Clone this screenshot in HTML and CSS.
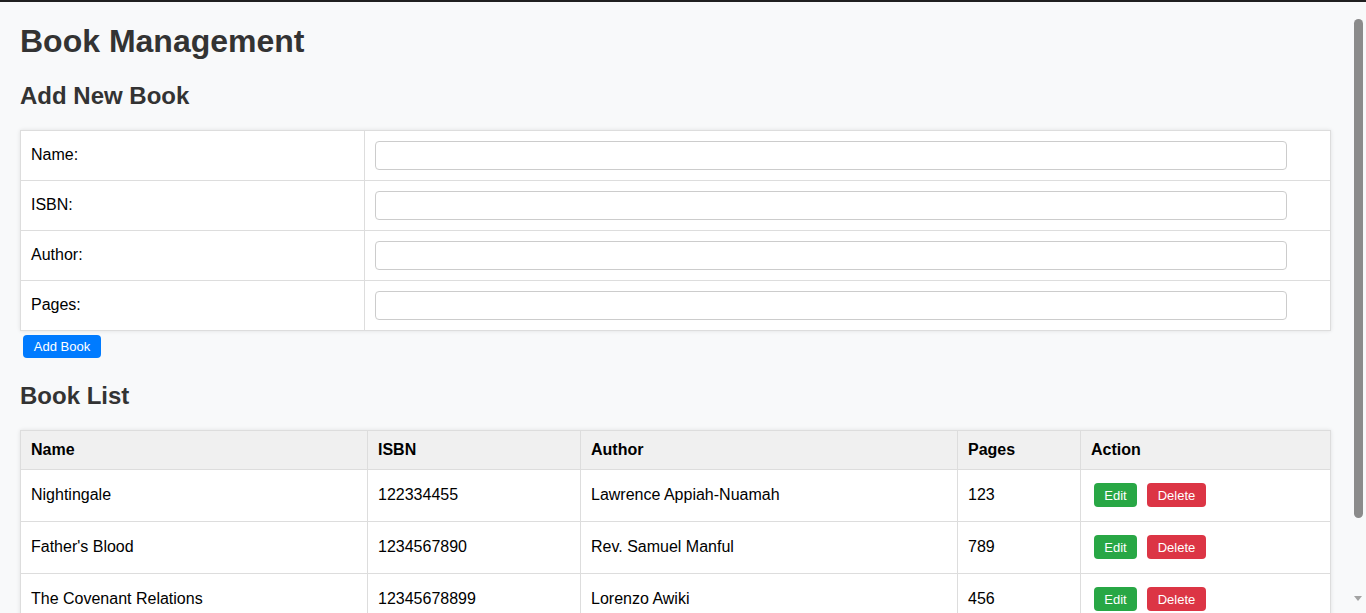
FILE: index.html
```html
<!DOCTYPE html>
<html lang="en">
<head>
<meta charset="utf-8">
<title>Book Management</title>
<link rel="stylesheet" href="styles.css">
</head>
<body>
<div class="page">
  <h1 class="title">Book Management</h1>
  <h2 class="section-title">Add New Book</h2>
  <form class="book-form">
    <table class="form-table">
      <tr><td class="label-cell"><label for="name">Name:</label></td><td class="input-cell"><input id="name" class="text-input" type="text"></td></tr>
      <tr><td class="label-cell"><label for="isbn">ISBN:</label></td><td class="input-cell"><input id="isbn" class="text-input" type="text"></td></tr>
      <tr><td class="label-cell"><label for="author">Author:</label></td><td class="input-cell"><input id="author" class="text-input" type="text"></td></tr>
      <tr><td class="label-cell"><label for="pages">Pages:</label></td><td class="input-cell"><input id="pages" class="text-input" type="text"></td></tr>
    </table>
    <button type="button" class="btn btn-add">Add Book</button>
  </form>
  <h2 class="section-title list-title">Book List</h2>
  <table class="list-table">
    <thead>
      <tr>
        <th class="col-name">Name</th>
        <th class="col-isbn">ISBN</th>
        <th class="col-author">Author</th>
        <th class="col-pages">Pages</th>
        <th class="col-action">Action</th>
      </tr>
    </thead>
    <tbody>
      <tr>
        <td>Nightingale</td><td>122334455</td><td>Lawrence Appiah-Nuamah</td><td>123</td>
        <td class="action-cell"><button class="btn btn-edit">Edit</button><button class="btn btn-delete">Delete</button></td>
      </tr>
      <tr>
        <td>Father's Blood</td><td>1234567890</td><td>Rev. Samuel Manful</td><td>789</td>
        <td class="action-cell"><button class="btn btn-edit">Edit</button><button class="btn btn-delete">Delete</button></td>
      </tr>
      <tr>
        <td>The Covenant Relations</td><td>12345678899</td><td>Lorenzo Awiki</td><td>456</td>
        <td class="action-cell"><button class="btn btn-edit">Edit</button><button class="btn btn-delete">Delete</button></td>
      </tr>
    </tbody>
  </table>
</div>
<div class="scrollbar" aria-hidden="true">
  <div class="scroll-thumb"></div>
  <div class="scroll-arrow"></div>
</div>
</body>
</html>
```

FILE: styles.css
```css
html, body {
  margin: 0;
  padding: 0;
}
body {
  background: #f8f9fa;
  font-family: "Liberation Sans", Arial, sans-serif;
  color: #000;
  border-top: 2px solid #202020;
}
.page {
  padding: 21px 35px 20px 20px;
}
.title {
  margin: 0;
  font-size: 32px;
  color: #333;
  line-height: 37px;
}
.section-title {
  margin: 22px 0 20px;
  font-size: 24px;
  line-height: 28px;
  color: #333;
}
.list-title {
  margin-top: 24px;
}
.book-form {
  margin: 0;
}
table {
  width: 100%;
  border-collapse: collapse;
  background: #fff;
  box-shadow: 0 0 4px rgba(0,0,0,0.1);
  font-size: 16px;
}
td, th {
  border: 1px solid #ddd;
  padding: 9px 10px 11px;
  text-align: left;
  line-height: 18px;
}
.list-table th {
  background: #f0f0f0;
  font-weight: bold;
  padding: 10px;
}
.label-cell {
  width: 323px;
}
.input-cell {
  padding: 10px;
}
.text-input {
  display: block;
  width: 912px;
  height: 29px;
  box-sizing: border-box;
  border: 1px solid #ccc;
  border-radius: 4px;
  padding: 5px;
  font-size: 14px;
  background: #fff;
}
.btn {
  font-family: "Liberation Sans", Arial, sans-serif;
  font-size: 13px;
  color: #fff;
  border: none;
  border-radius: 4px;
  cursor: pointer;
  height: 24px;
  padding: 0 6px;
  vertical-align: middle;
}
.btn-add {
  background: #007bff;
  margin: 4px 0 0 3px;
  width: 78px;
  height: 23px;
}
.list-table td {
  height: 31px;
}
.list-table .action-cell {
  padding: 10px;
}
.col-name { width: 326px; }
.col-isbn { width: 192px; }
.col-author { width: 356px; }
.col-pages { width: 102px; }
.btn-edit {
  background: #28a745;
  width: 43px;
  margin: -1px 10px 0 3px;
}
.btn-delete {
  background: #dc3545;
  width: 59px;
  margin-top: -1px;
}
.scrollbar {
  position: fixed;
  top: 2px;
  right: 0;
  bottom: 0;
  width: 15px;
  background: #f8f9fa;
}
.scroll-thumb {
  position: absolute;
  left: 3px;
  top: 17px;
  width: 9px;
  height: 499px;
  border-radius: 5px;
  background: #8b8b8b;
}
.scroll-arrow {
  position: absolute;
  left: 3px;
  bottom: 12px;
  width: 0;
  height: 0;
  border-left: 4px solid transparent;
  border-right: 4px solid transparent;
  border-top: 5px solid #a3a3a3;
}
```
